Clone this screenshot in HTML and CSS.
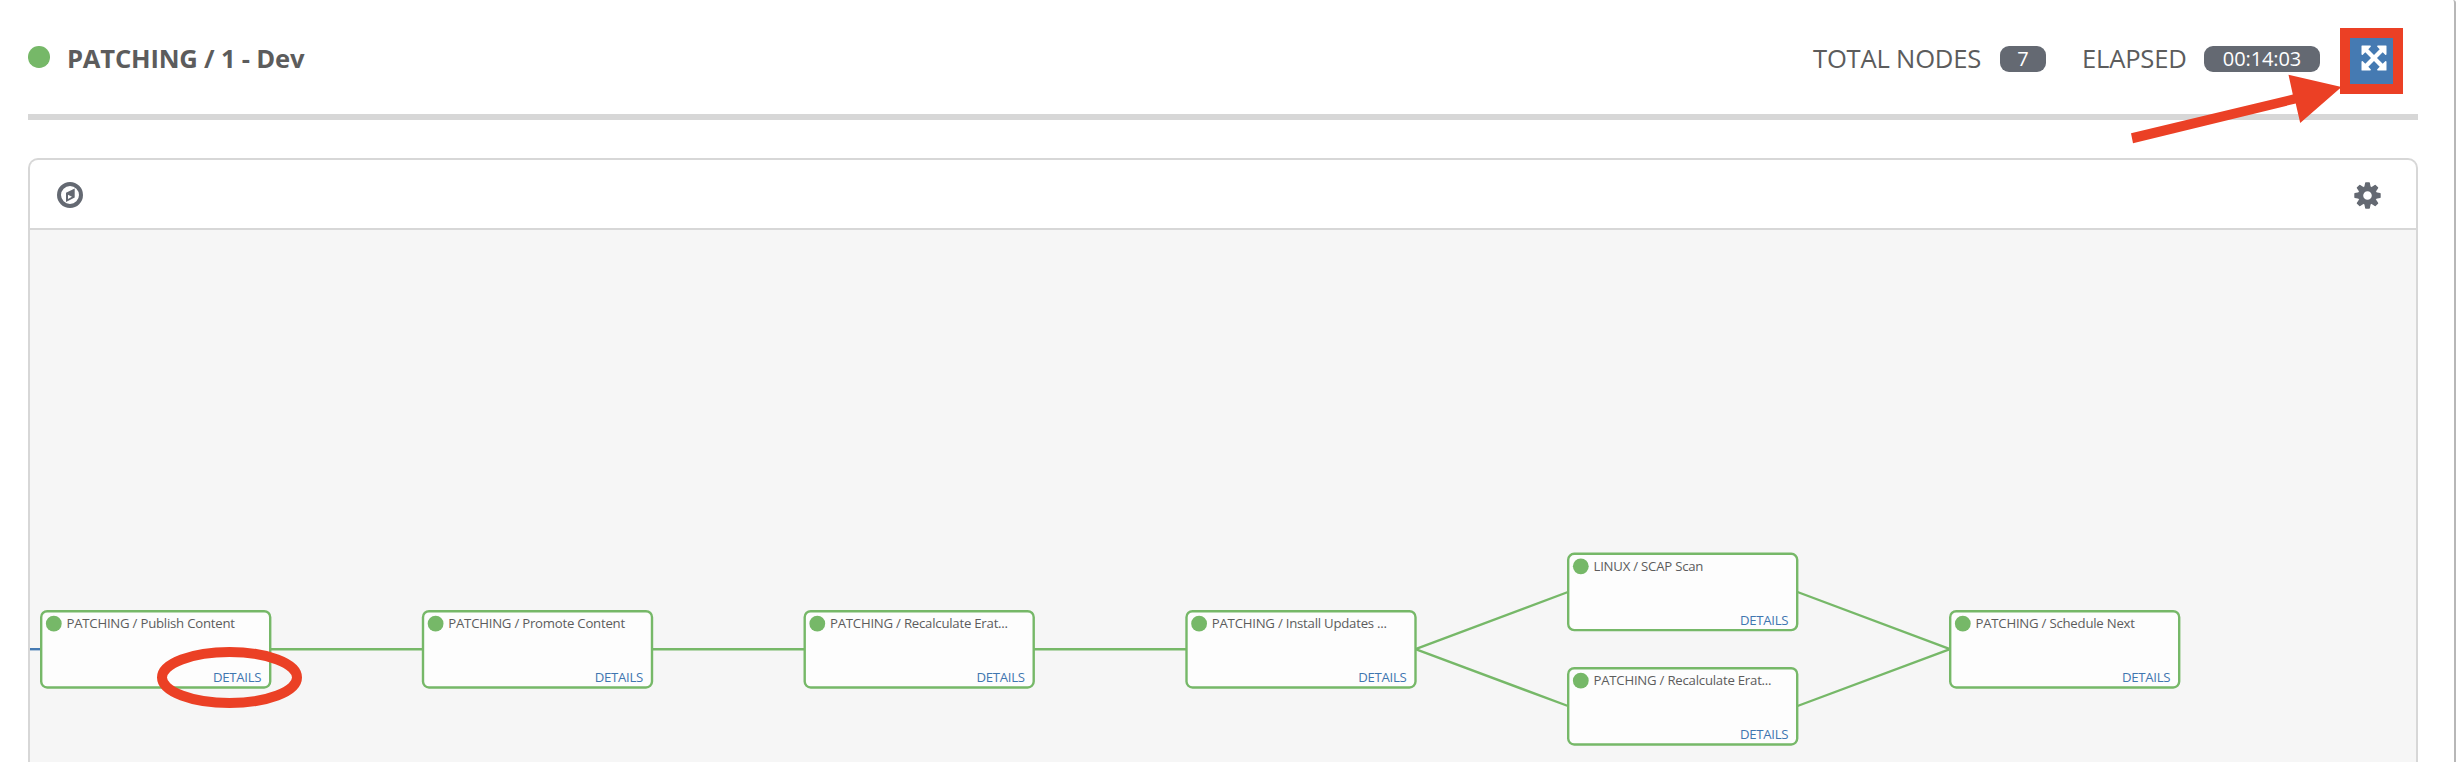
FILE: index.html
```html
<!DOCTYPE html>
<html lang="en">
<head>
<meta charset="utf-8">
<title>PATCHING / 1 - Dev</title>
<link rel="stylesheet" href="styles.css">
</head>
<body>
<main class="page">
  <header class="header">
    <span class="status-dot"></span>
    <h1 class="title">PATCHING / 1 - Dev</h1>
    <div class="stats">
      <span class="label nodes-label">TOTAL NODES</span>
      <span class="badge badge-count">7</span>
      <span class="label elapsed-label">ELAPSED</span>
      <span class="badge badge-time">00:14:03</span>
      <button class="expand" aria-label="Expand">
        <svg width="26" height="26" viewBox="0 0 26 26"><path fill="#fff" d="M1 .5h8.200q1.200.3.500 1.300L7.300 4.300 13 10l5.700-5.700-2.400-2.500q-.7-1 .5-1.300H25q.5 0 .5.500v8.200q-.3 1.200-1.300.5l-2.500-2.400L16 13l5.700 5.700 2.500-2.400q1-.7 1.300.5V25q0 .5-.5.500h-8.200q-1.200-.3-.5-1.300l2.400-2.500L13 16l-5.700 5.700 2.400 2.500q.7 1-.5 1.300H1q-.5 0-.5-.5v-8.200q.3-1.200 1.300-.5l2.500 2.400L10 13 4.300 7.300 1.800 9.700q-1 .7-1.300-.5V1Q.5.500 1 .500z"/></svg>
      </button>
    </div>
  </header>
  <section class="panel">
    <div class="toolbar">
      <svg width="26" height="26" viewBox="0 0 26 26"><circle cx="13" cy="13" r="11" fill="none" stroke="#646972" stroke-width="4"/><path fill="#646972" fill-rule="evenodd" d="M17.700 6.500v9L9 20v-9.200zM11 12.700v4.300l4-2.200z"/></svg>
      <svg width="27" height="27" viewBox="-13.500 -13.500 27 27"><g fill="#646972"><path fill-rule="evenodd" d="M-9.500 0a9.500 9.500 0 1 0 19 0a9.500 9.500 0 1 0-19 0zM-4.300 0a4.300 4.300 0 1 1 8.600 0a4.300 4.300 0 1 1-8.600 0z"/><path id="tooth" d="M-3.200-8.500l.8-4.100q.1-.6.700-.6h3.400q.6 0 .7.600l.8 4.100z"/><use href="#tooth" transform="rotate(45)"/><use href="#tooth" transform="rotate(90)"/><use href="#tooth" transform="rotate(135)"/><use href="#tooth" transform="rotate(180)"/><use href="#tooth" transform="rotate(225)"/><use href="#tooth" transform="rotate(270)"/><use href="#tooth" transform="rotate(315)"/></g></svg>
    </div>
    <div class="canvas">
      <svg class="graph" width="2386" height="532" viewBox="30 230 2386 532">
        <path class="link link-start" d="M20 649.200H41"/>
        <path class="link" d="M271 649.200H423M652 649.200H805M1034 649.200H1186M1415.500 649.200L1568 592M1415.500 649.200L1568 706M1797.500 592L1950 649.200M1797.500 706L1950 649.200"/>
        <defs><g id="node"><rect x="1.200" y="1.200" width="229" height="76.300" rx="6" fill="#fdfdfd" stroke="#76b868" stroke-width="2.400"/><circle cx="13.800" cy="13.700" r="7.900" fill="#76b868"/></g></defs>
        <g transform="translate(40 610)"><use href="#node"/><text x="26.500" y="18">PATCHING / Publish Content</text><text class="details" x="173" y="72">DETAILS</text></g>
        <g transform="translate(421.800 610)"><use href="#node"/><text x="26.500" y="18">PATCHING / Promote Content</text><text class="details" x="173" y="72">DETAILS</text></g>
        <g transform="translate(803.500 610)"><use href="#node"/><text x="26.500" y="18">PATCHING / Recalculate Erat...</text><text class="details" x="173" y="72">DETAILS</text></g>
        <g transform="translate(1185.300 610)"><use href="#node"/><text x="26.500" y="18">PATCHING / Install Updates ...</text><text class="details" x="173" y="72">DETAILS</text></g>
        <g transform="translate(1567 552.600)"><use href="#node"/><text x="26.500" y="18">LINUX / SCAP Scan</text><text class="details" x="173" y="72">DETAILS</text></g>
        <g transform="translate(1567 667)"><use href="#node"/><text x="26.500" y="18">PATCHING / Recalculate Erat...</text><text class="details" x="173" y="72">DETAILS</text></g>
        <g transform="translate(1949 610)"><use href="#node"/><text x="26.500" y="18">PATCHING / Schedule Next</text><text class="details" x="173" y="72">DETAILS</text></g>
      </svg>
    </div>
  </section>
</main>
<svg class="annotations" width="2458" height="762" viewBox="0 0 2458 762">
  <rect x="2345" y="33" width="53" height="56"/>
  <ellipse cx="229.500" cy="677.500" rx="67.500" ry="25.500"/>
  <path class="arrow" d="M2341.500 87L2288.500 74.700 2292.800 94.500 2131 133.300 2133 143.200 2295.700 103.500 2300.200 123z"/>
</svg>
</body>
</html>
```
FILE: styles.css
```css
* { box-sizing: border-box; }
body { margin: 0; background: #fff; font-family: "Open Sans", "Noto Sans", sans-serif; color: #5c5c5c; overflow: hidden; }
.page { width: 2456px; height: 762px; padding: 0 36px 0 28px; border-right: 2px solid #b7b7b7; border-top-right-radius: 3px; overflow: hidden; }
.header { height: 120px; display: flex; align-items: flex-start; padding-top: 38px; border-bottom: 6px solid #d7d7d7; }
.status-dot { flex: none; width: 21.500px; height: 21.500px; margin-top: 8.200px; border-radius: 50%; background: #76b868; }
.title { margin: 0 0 0 17.500px; font-size: 25.600px; line-height: 42px; font-weight: 700; letter-spacing: -.2px; white-space: nowrap; }
.stats { display: flex; align-items: flex-start; margin-left: auto; white-space: nowrap; }
.label { font-size: 25.600px; line-height: 42px; letter-spacing: -.2px; }
.nodes-label { width: 187px; }
.elapsed-label { width: 122px; }
.badge { height: 26px; margin-top: 8px; border-radius: 9px; background: #646972; color: #fff; font-size: 20px; line-height: 26px; text-align: center; }
.badge-count { width: 46px; margin-right: 36px; }
.badge-time { width: 116px; letter-spacing: -.1px; }
.expand { width: 44px; height: 46px; margin: 0 25px 0 29px; padding: 7px 0 0 5px; border: 0; background: #457ab2; line-height: 0; text-align: center; display: flex; justify-content: center; }
.panel { margin-top: 38px; border: 2px solid #d7d7d7; border-bottom: 0; border-radius: 10px 10px 0 0; height: 604px; overflow: hidden; }
.toolbar { height: 70px; display: flex; align-items: center; justify-content: space-between; padding: 2px 35px 0 26.500px; border-bottom: 2px solid #d7d7d7; }
.canvas { height: 532px; background: #f6f6f6; }
.graph { display: block; }
.graph text { font-size: 13.200px; letter-spacing: -.23px; fill: #5c5c5c; }
.graph .details { fill: #3f76b0; letter-spacing: -.3px; }
.link { fill: none; stroke: #76b868; stroke-width: 2.400; }
.link-start { stroke: #457ab2; }
.annotations { position: absolute; left: 0; top: 0; pointer-events: none; fill: none; stroke: #eb4025; stroke-width: 10; }
.arrow { fill: #eb4025; stroke: none; }
```
